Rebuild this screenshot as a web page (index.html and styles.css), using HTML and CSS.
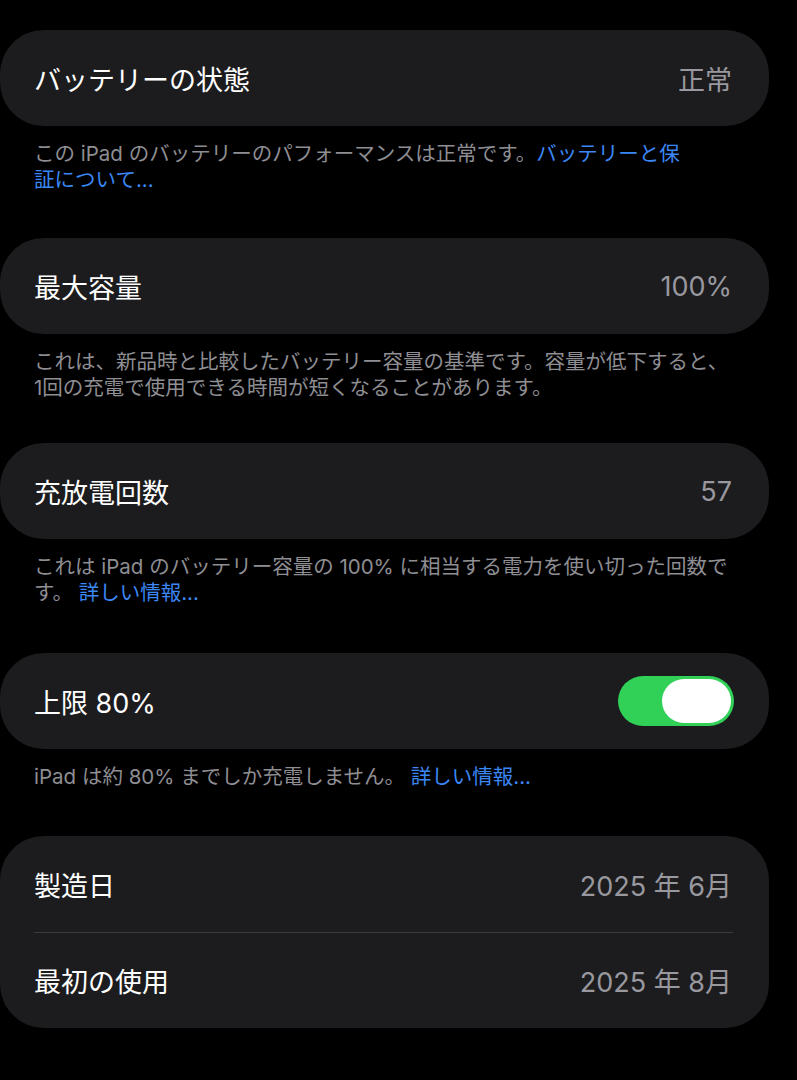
FILE: index.html
```html
<!DOCTYPE html>
<html lang="ja">
<head>
  <meta charset="UTF-8" />
  <meta name="viewport" content="width=device-width, initial-scale=1.0" />
  <title>バッテリーの状態と充電</title>
  <link rel="stylesheet" href="styles.css">
</head>
<body>
  <main class="settings">
    <section class="group">
      <div class="card">
        <div class="row">
          <span class="label">バッテリーの状態</span>
          <span class="value">正常</span>
        </div>
      </div>
      <p class="note">この iPad のバッテリーのパフォーマンスは正常です。<a href="#">バッテリーと保<br>証について...</a></p>
    </section>

    <section class="group">
      <div class="card">
        <div class="row">
          <span class="label">最大容量</span>
          <span class="value">100%</span>
        </div>
      </div>
      <p class="note">これは、新品時と比較したバッテリー容量の基準です。容量が低下すると、<br>1回の充電で使用できる時間が短くなることがあります。</p>
    </section>

    <section class="group">
      <div class="card">
        <div class="row">
          <span class="label">充放電回数</span>
          <span class="value">57</span>
        </div>
      </div>
      <p class="note">これは iPad のバッテリー容量の 100% に相当する電力を使い切った回数で<br>す。 <a href="#">詳しい情報...</a></p>
    </section>

    <section class="group">
      <div class="card">
        <div class="row">
          <span class="label">上限 80%</span>
          <!-- トグル（オン） -->
          <span class="switch on" role="switch" aria-checked="true"><span class="knob"></span></span>
        </div>
      </div>
      <p class="note">iPad は約 80% までしか充電しません。 <a href="#">詳しい情報...</a></p>
    </section>

    <section class="group">
      <div class="card">
        <div class="row">
          <span class="label">製造日</span>
          <span class="value">2025 年 6月</span>
        </div>
        <div class="row">
          <span class="label">最初の使用</span>
          <span class="value">2025 年 8月</span>
        </div>
      </div>
    </section>
  </main>
</body>
</html>
```

FILE: styles.css
```css
body {
  margin: 0;
  background: #000;
  color: #fff;
  font-family: "Inter", "Noto Sans CJK JP", sans-serif;
}
.settings { padding-top: 30px; width: 769px; }

.group { margin-bottom: 45px; }
.group:nth-child(2) { margin-bottom: 42px; }
.group:nth-child(3) { margin-bottom: 47px; }
.group:nth-child(4) { margin-bottom: 46px; }

.card {
  background: #1c1c1e;
  border-radius: 44px;
}
.row {
  display: flex;
  align-items: center;
  justify-content: space-between;
  height: 96px;
  padding: 0 37px 0 34px;
  font-size: 27px;
}
/* 複数行カードの区切り線（左右とも内側まで） */
.row + .row {
  height: 95px;
  border-top: 1px solid #3a3a3c;
  margin: 0 36px 0 34px;
  padding: 0 1px 0 0;
}
.label { color: #fff; }
.value { color: #98989e; }

.note {
  margin: 15px 0 0;
  padding: 0 0 0 34px;
  font-size: 20.5px;
  line-height: 26px;
  color: #8e8e93;
  white-space: nowrap;
}
.note a { color: #3b87f5; text-decoration: none; }

/* スイッチ */
.switch {
  display: flex;
  justify-content: flex-end;
  align-items: center;
  width: 116px;
  height: 50px;
  padding: 3px;
  box-sizing: border-box;
  border-radius: 25px;
  background: #39393d;
  margin-right: -2px;
}
.switch.on { background: #31d158; }
.knob {
  width: 69px;
  height: 44px;
  border-radius: 22px;
  background: #fff;
}
```
